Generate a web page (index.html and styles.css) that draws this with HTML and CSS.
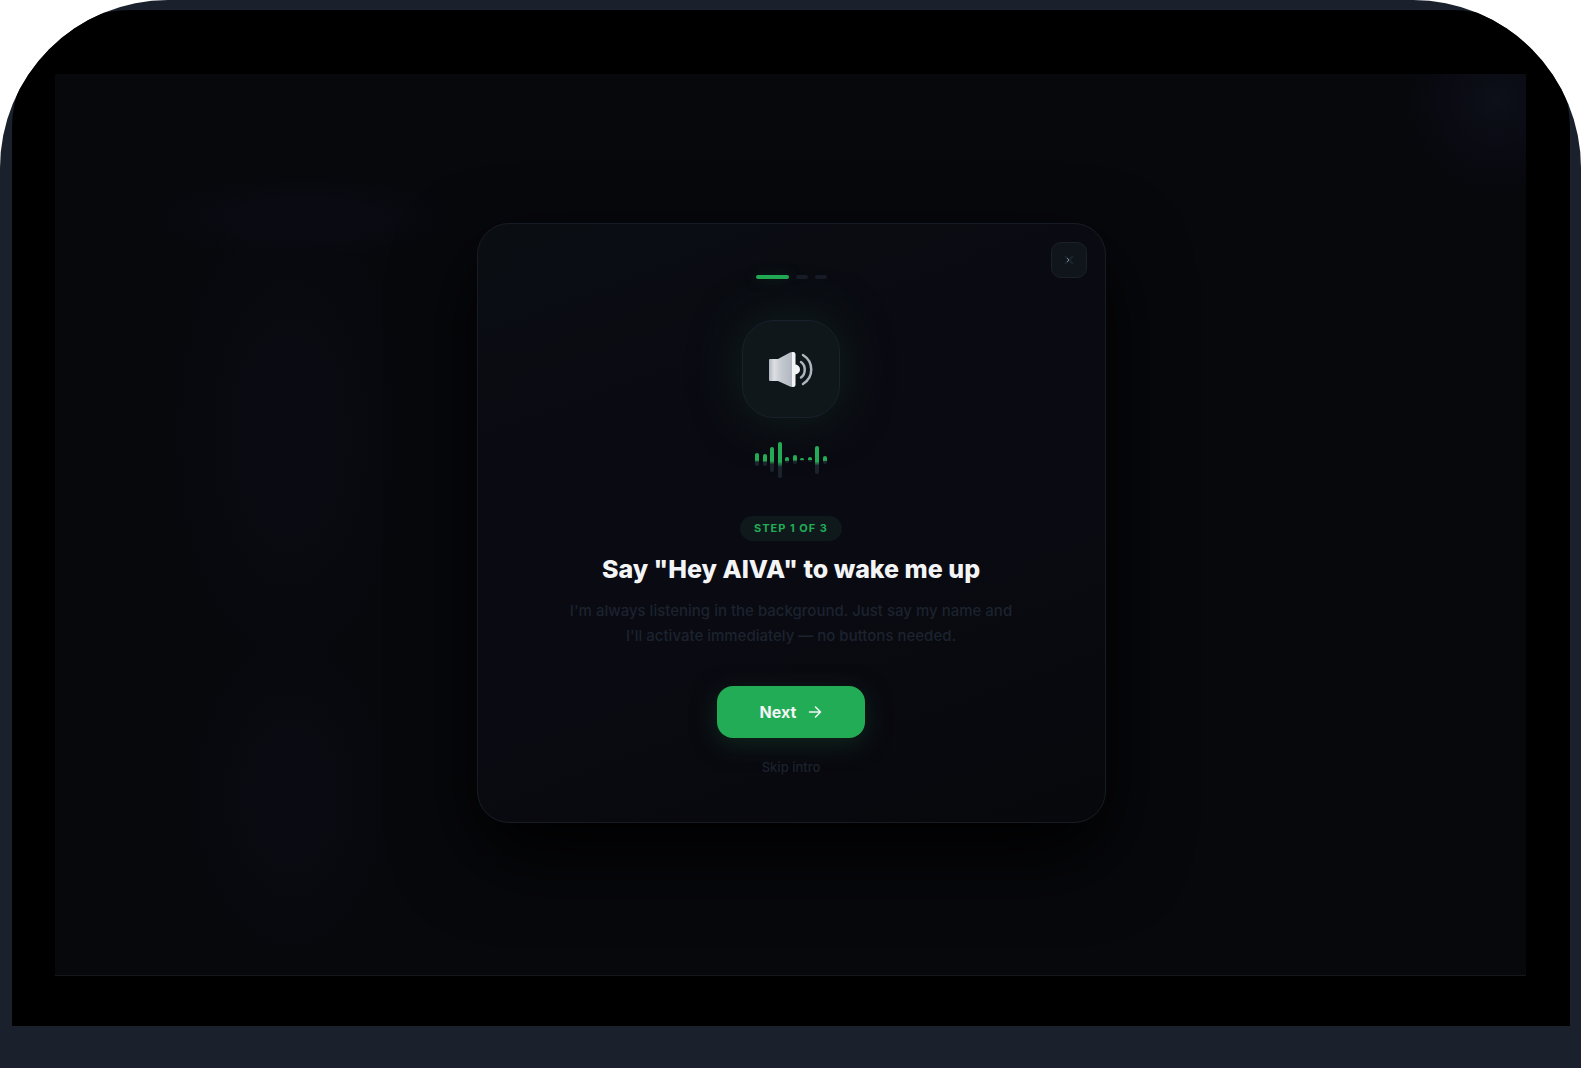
FILE: index.html
```html
<!DOCTYPE html>
<html lang="en">
<head>
  <meta charset="UTF-8">
  <meta name="viewport" content="width=device-width, initial-scale=1.0">
  <title>AIVA - Intro</title>
  <link rel="stylesheet" href="styles.css">
</head>
<body>
<div class="frame">
  <div class="bezel">
    <main class="screen">
      <section class="card" role="dialog" aria-labelledby="title">
        <button class="close" type="button" aria-label="Close">
          <svg width="12" height="12" viewBox="0 0 12 12" fill="none">
            <path d="M2 2l8 8M10 2l-8 8" stroke="#1b232d" stroke-width="2"/>
            <path d="M4 4l2 2-2 2" stroke="#7d858d" stroke-width="1"/>
          </svg>
        </button>

        <div class="dots">
          <span class="dot active"></span>
          <span class="dot"></span>
          <span class="dot"></span>
        </div>

        <div class="icon-box">
          <svg width="46" height="38" viewBox="0 0 46 38" fill="none">
            <defs>
              <linearGradient id="cone" x1="0" y1="0" x2="1" y2="0">
                <stop offset="0" stop-color="#aeb5be"/>
                <stop offset="0.2" stop-color="#dcdfe3"/>
                <stop offset="0.5" stop-color="#c3c8ce"/>
                <stop offset="1" stop-color="#aeb5be"/>
              </linearGradient>
            </defs>
            <path d="M2 9h8L22 2.5 24 2h2v35h-2l-2-.5L10 31H2a1 1 0 0 1-1-1V10a1 1 0 0 1 1-1z" fill="url(#cone)"/>
            <path d="M24 2.5c2-1 3.5 0 3.5 2v30c0 2-1.5 3-3.5 2z" fill="#f3f4f6"/>
            <path d="M27 14.5a5 5 0 0 1 0 10z" fill="#f3f4f6"/>
            <path d="M33 12c5 3.5 5 12 0 15.5" stroke="#aeb5be" stroke-width="2.5" stroke-linecap="round"/>
            <path d="M35 5c11 7 11 22 0 29" stroke="#aeb5be" stroke-width="2.5" stroke-linecap="round"/>
          </svg>
        </div>

        <div class="wave">
          <span style="height: 13px"></span>
          <span style="height: 12px"></span>
          <span style="height: 25px"></span>
          <span style="height: 36px"></span>
          <span style="height: 6px"></span>
          <span style="height: 9px"></span>
          <span style="height: 3px"></span>
          <span style="height: 5px"></span>
          <span style="height: 28px"></span>
          <span style="height: 8px"></span>
        </div>

        <span class="step">STEP 1 OF 3</span>
        <h1 id="title">Say "Hey AIVA" to wake me up</h1>
        <p>I'm always listening in the background. Just say my name and I'll activate immediately — no buttons needed.</p>

        <button class="next" type="button">
          Next
          <svg width="14" height="14" viewBox="0 0 14 14" fill="none" stroke="#f3f4f6" stroke-width="1.5" stroke-linecap="round" stroke-linejoin="round">
            <path d="M1.5 7h11M7.5 2l5 5-5 5"/>
          </svg>
        </button>
        <button class="skip" type="button">Skip intro</button>
      </section>
    </main>
  </div>
</div>
</body>
</html>
```
FILE: styles.css
```css
* {
  box-sizing: border-box;
}

body {
  margin: 0;
  padding: 0 1px 1px 0;
  height: 100vh;
  background: #ffffff;
  font-family: Inter, "Liberation Sans", sans-serif;
}

button {
  font-family: inherit;
  cursor: pointer;
}

.frame {
  display: flex;
  height: 100%;
  padding: 10px 11px 42px 12px;
  background: #1b212c;
  border-radius: 168px 168px 0 0;
  overflow: hidden;
}

.bezel {
  display: flex;
  flex: 1;
  padding: 64px 44px 50px 43px;
  background: #000000;
  border-radius: 118px 118px 0 0;
}

.screen {
  display: flex;
  flex: 1;
  align-items: center;
  justify-content: center;
  padding: 0 0 4px 1px;
  border-bottom: 1px solid #14171b;
  background:
    radial-gradient(circle at 98% 3%, #0c1018 0, #0a0a13 50px, #0a0a1300 90px),
    radial-gradient(ellipse 150px 40px at 17% 16%, #0a0a13 40%, #0a0a1300 100%),
    radial-gradient(ellipse 120px 240px at 16% 40%, #0a0a12 30%, #0a0a1200 100%),
    radial-gradient(ellipse 100px 160px at 16% 80%, #0a0a12 30%, #0a0a1200 100%),
    #07080c;
}

.card {
  position: relative;
  display: flex;
  flex-direction: column;
  align-items: center;
  width: 100%;
  max-width: 629px;
  padding: 51px 80px 44px;
  border: 1px solid #171c24;
  border-radius: 32px;
  background: linear-gradient(160deg, #0a0e13 0%, #0a0b12 30%, #0a0a12 60%, #07080b 100%);
  box-shadow: 0 32px 80px #000000;
}

.close {
  position: absolute;
  top: 18px;
  right: 18px;
  display: flex;
  align-items: center;
  justify-content: center;
  width: 36px;
  height: 36px;
  padding: 0;
  border: 1px solid #1a212a;
  border-radius: 10px;
  background: #10151b;
}

.dots {
  display: flex;
  gap: 7px;
  margin-bottom: 41px;
}

.dot {
  width: 12px;
  height: 4px;
  border-radius: 2px;
  background: #171c26;
}

.dot.active {
  width: 33px;
  background: #22ac55;
  box-shadow: 0 0 12px #10241b;
}

.icon-box {
  display: flex;
  align-items: center;
  justify-content: center;
  width: 98px;
  height: 98px;
  margin-bottom: 24px;
  border: 1px solid #1a202c;
  border-radius: 32px;
  background: #0f171a;
  box-shadow: 0 0 48px #10201d;
}

.wave {
  display: flex;
  align-items: center;
  justify-content: space-between;
  width: 72px;
  height: 36px;
  margin-bottom: 38px;
}

.wave span {
  width: 4px;
  border-radius: 2px;
  background: linear-gradient(#22ac55 55%, #1b232d 70%);
}

.step {
  padding: 0 14px;
  border-radius: 13px;
  background: #0f191b;
  color: #22ac55;
  font-size: 11px;
  font-weight: 700;
  line-height: 25px;
  letter-spacing: 1px;
}

h1 {
  margin: 11px 0 12px;
  color: #f3f4f6;
  font-size: 25px;
  font-weight: 800;
  line-height: 34px;
  white-space: nowrap;
}

p {
  max-width: 460px;
  margin: 0 0 38px;
  color: #1b232e;
  font-size: 15px;
  font-weight: 500;
  line-height: 25px;
  text-align: center;
}

.next {
  display: flex;
  align-items: center;
  justify-content: center;
  gap: 12px;
  width: 148px;
  height: 52px;
  border: 0;
  border-radius: 16px;
  background: #22ac55;
  color: #f3f4f6;
  font-size: 16px;
  font-weight: 700;
  box-shadow: 0 6px 24px #10261e;
}

.skip {
  margin-top: 18px;
  padding: 0;
  border: 0;
  background: none;
  color: #1b222d;
  font-size: 13px;
  font-weight: 500;
  line-height: 22px;
}
```
